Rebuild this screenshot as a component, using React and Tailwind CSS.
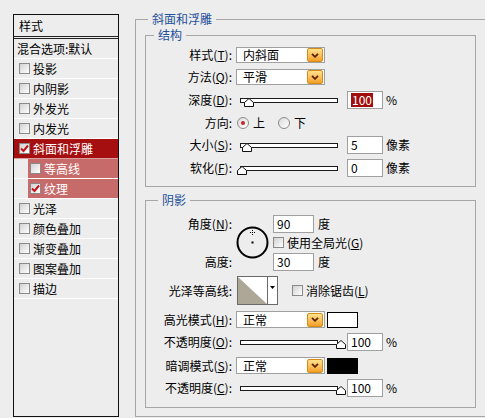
import React from "react";

const FONT = "font-['Noto_Sans_CJK_SC','Noto_Sans',sans-serif]";

function Box({ checked, small }) {
  return (
    <span className="w-[11px] h-[11px] border border-[#8a8a8a] bg-gradient-to-br from-[#d2d2d2] to-white flex items-center justify-center shrink-0">
      {checked && (
        <svg width="9" height="9" viewBox="0 0 9 9">
          <path d="M1 4.5 L3.5 7 L8 1.5" stroke="#c0141a" strokeWidth="2" fill="none" />
        </svg>
      )}
    </span>
  );
}

function MenuRow({ label, checked, tone, sub }) {
  if (tone === "dark") {
    return (
      <div className="h-[20px] bg-[#a50f0f] border-b border-[#d9a0a0] flex items-center pl-[5px] gap-[3px] text-white">
        <Box checked={checked} />
        <span>{label}</span>
      </div>
    );
  }
  if (sub) {
    return (
      <div className="h-[20px] border-b border-white pl-[14px] flex">
        <div className="flex-1 bg-[#c76a6a] flex items-center pl-[2px] gap-[3px] text-white">
          <Box checked={checked} />
          <span>{label}</span>
        </div>
      </div>
    );
  }
  return (
    <div className="h-[20px] border-b border-white flex items-center pl-[5px] gap-[3px]">
      <Box checked={checked} />
      <span>{label}</span>
    </div>
  );
}

function Label({ children }) {
  return <div className="w-[86px] text-right shrink-0 leading-[14px]">{children}</div>;
}

function U({ children }) {
  return <span className="underline">{children}</span>;
}

function Dropdown({ value, h = "h-[16px]" }) {
  return (
    <div className={`w-[89px] ${h} border border-[#a0a0a0] bg-white flex items-center justify-between pl-[6px] pr-[1px] ml-[4px]`}>
      <span className="leading-[14px]">{value}</span>
      <span className="w-[16px] h-[14px] rounded-[2px] border border-[#d58b17] bg-gradient-to-b from-[#ffe28c] to-[#f5a020] flex items-center justify-center">
        <svg width="8" height="5" viewBox="0 0 8 5">
          <path d="M1 0.8 L4 3.8 L7 0.8" stroke="#5a2200" strokeWidth="1.8" fill="none" />
        </svg>
      </span>
    </div>
  );
}

function Slider({ pos }) {
  return (
    <div className="ml-[8px] w-[98px] h-[5px] border border-[#1a1a1a] bg-white relative shrink-0">
      <svg width="10" height="9" viewBox="0 0 10 9" className="absolute top-[-1px]" style={{ left: pos }}>
        <path d="M0.5 4.5 L5 0.5 L9.5 4.5 L9.5 8.5 L0.5 8.5 Z" fill="white" stroke="#111" />
      </svg>
    </div>
  );
}

function Field({ children, className = "" }) {
  return (
    <div className={`w-[36px] h-[18px] border border-[#a0a0a0] bg-white flex items-center pl-[3px] leading-[14px] ${className}`}>
      {children}
    </div>
  );
}

function Radio({ on }) {
  return (
    <span className="w-[12px] h-[12px] rounded-full border border-[#8a8a8a] bg-gradient-to-br from-[#dcdcdc] to-white flex items-center justify-center">
      {on && <span className="w-[4px] h-[4px] rounded-full bg-[#c62828]" />}
    </span>
  );
}

function SliderRow({ label, pos, value, unit, selected }) {
  return (
    <div className="h-[18px] flex items-center">
      <Label>{label}</Label>
      <Slider pos={pos} />
      <Field className="ml-[9px]">
        {selected ? <span className="bg-[#a00d0d] text-white px-[1px]">{value}</span> : value}
      </Field>
      <span className="ml-[3px]">{unit}</span>
    </div>
  );
}

export default function App() {
  const menu = [
    { label: "投影" },
    { label: "内阴影" },
    { label: "外发光" },
    { label: "内发光" },
    { label: "斜面和浮雕", checked: true, tone: "dark" },
    { label: "等高线", sub: true },
    { label: "纹理", sub: true, checked: true },
    { label: "光泽" },
    { label: "颜色叠加" },
    { label: "渐变叠加" },
    { label: "图案叠加" },
    { label: "描边" },
  ];

  return (
    <div className={`w-[485px] h-[418px] bg-[#ededed] overflow-hidden flex items-start text-[12px] text-black ${FONT}`}>
      {/* style list */}
      <div className="ml-[13px] mt-[14px] w-[106px] h-[403px] border border-[#111] flex flex-col shrink-0">
        <div className="h-[24px] border-b-[3px] border-double border-[#222] flex items-center pl-[5px]">样式</div>
        <div className="h-[20px] border-b border-white flex items-center pl-[3px]">混合选项:默认</div>
        {menu.map((m, i) => (
          <MenuRow key={i} {...m} />
        ))}
      </div>

      {/* bevel & emboss */}
      <fieldset className="ml-[16px] mt-[12px] w-[352px] h-[405px] border border-[#a6a6a6] p-0 shrink-0">
        <legend className="ml-[12px] px-[4px] leading-[14px] text-[#24509a]">斜面和浮雕</legend>

        <fieldset className="ml-[9px] mt-[2px] w-[331px] h-[159px] border border-[#a6a6a6] p-0">
          <legend className="ml-[8px] px-[4px] leading-[14px] text-[#24509a]">结构</legend>
          <div className="flex flex-col">
            <div className="mt-[5px] flex items-center">
              <Label>样式(<U>T</U>):</Label>
              <Dropdown value="内斜面" />
            </div>
            <div className="mt-[6px] flex items-center">
              <Label>方法(<U>Q</U>):</Label>
              <Dropdown value="平滑" />
            </div>
            <div className="mt-[6px]">
              <SliderRow label={<>深度(<U>D</U>):</>} pos={3} value="100" unit="%" selected />
            </div>
            <div className="mt-[6px] h-[16px] flex items-center">
              <Label>方向:</Label>
              <span className="ml-[5px]"><Radio on /></span>
              <span className="ml-[4px]">上</span>
              <span className="ml-[13px]"><Radio /></span>
              <span className="ml-[4px]">下</span>
            </div>
            <div className="mt-[5px]">
              <SliderRow label={<>大小(<U>S</U>):</>} pos={1} value="5" unit="像素" />
            </div>
            <div className="mt-[5px]">
              <SliderRow label={<>软化(<U>F</U>):</>} pos={-4} value="0" unit="像素" />
            </div>
          </div>
        </fieldset>

        <fieldset className="ml-[9px] mt-[6px] w-[331px] h-[215px] border border-[#a6a6a6] p-0">
          <legend className="ml-[12px] px-[4px] leading-[14px] text-[#24509a]">阴影</legend>
          <div className="flex flex-col">
            <div className="mt-[8px] grid grid-cols-[86px_32px_auto] grid-rows-[18px_13px_18px] gap-y-[3px]">
              <div className="row-start-1 col-start-1 flex items-center justify-end">
                角度(<U>N</U>):
              </div>
              <div className="row-start-1 row-span-3 col-start-2 ml-[4px] self-center">
                <svg width="33" height="33" viewBox="0 0 33 33">
                  <circle cx="16.5" cy="16.5" r="15" stroke="#000" strokeWidth="2" fill="none" />
                  <rect x="15.5" y="15.5" width="2" height="2" fill="#000" />
                  <rect x="16" y="4" width="1" height="1" fill="#000" />
                  <rect x="16" y="8" width="1" height="1" fill="#000" />
                  <rect x="14" y="6" width="1" height="1" fill="#000" />
                  <rect x="18" y="6" width="1" height="1" fill="#000" />
                  <rect x="16" y="6" width="1" height="1" fill="#000" />
                </svg>
              </div>
              <div className="row-start-1 col-start-3 ml-[9px] flex items-center">
                <Field className="w-[41px]">90</Field>
                <span className="ml-[4px]">度</span>
              </div>
              <div className="row-start-2 col-start-3 ml-[9px] flex items-center gap-[3px]">
                <Box />
                <span>使用全局光(<U>G</U>)</span>
              </div>
              <div className="row-start-3 col-start-1 flex items-center justify-end mt-[2px]">高度:</div>
              <div className="row-start-3 col-start-3 ml-[9px] flex items-center mt-[2px]">
                <Field className="w-[41px]">30</Field>
                <span className="ml-[4px]">度</span>
              </div>
            </div>

            <div className="mt-[6px] h-[29px] flex items-center">
              <Label>光泽等高线:</Label>
              <div className="ml-[5px] w-[41px] h-[29px] border border-[#6a6a6a] bg-white flex">
                <svg width="29" height="27" viewBox="0 0 29 27">
                  <polygon points="0,0 29,27 0,27" fill="#aca797" />
                </svg>
                <div className="flex-1 border-l border-[#6a6a6a] flex justify-center pt-[9px]">
                  <svg width="5" height="3" viewBox="0 0 5 3">
                    <polygon points="0,0 5,0 2.5,3" fill="#000" />
                  </svg>
                </div>
              </div>
              <span className="ml-[14px]"><Box /></span>
              <span className="ml-[3px]">消除锯齿(<U>L</U>)</span>
            </div>

            <div className="mt-[6px] flex items-center">
              <Label>高光模式(<U>H</U>):</Label>
              <Dropdown value="正常" h="h-[17px]" />
              <div className="ml-[2px] w-[31px] h-[16px] border border-black bg-white" />
            </div>
            <div className="mt-[5px]">
              <SliderRow label={<>不透明度(<U>O</U>):</>} pos={95} value="100" unit="%" />
            </div>
            <div className="mt-[6px] flex items-center">
              <Label>暗调模式(<U>S</U>):</Label>
              <Dropdown value="正常" h="h-[17px]" />
              <div className="ml-[2px] w-[31px] h-[16px] bg-black" />
            </div>
            <div className="mt-[5px]">
              <SliderRow label={<>不透明度(<U>C</U>):</>} pos={95} value="100" unit="%" />
            </div>
          </div>
        </fieldset>
      </fieldset>
    </div>
  );
}
